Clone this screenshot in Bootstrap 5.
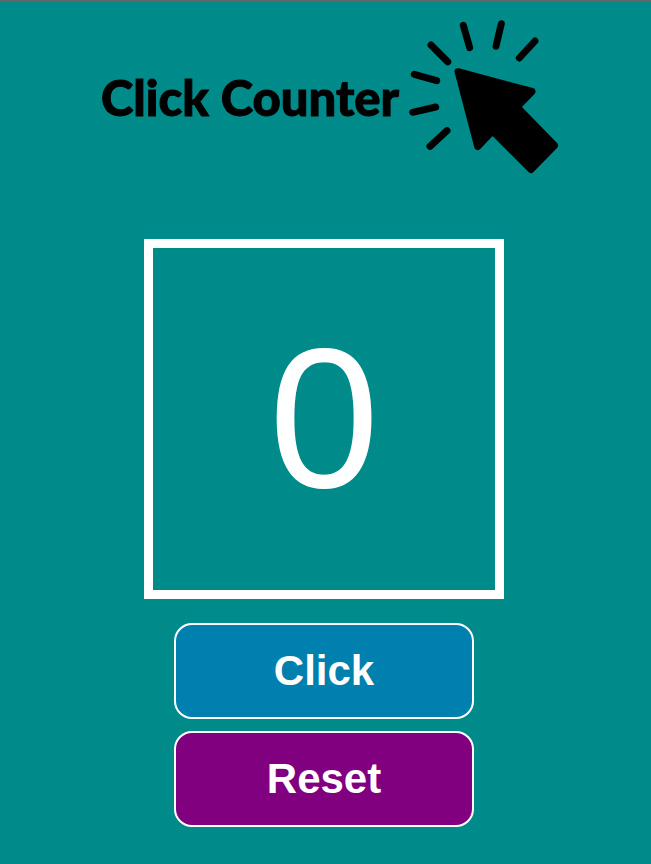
<!DOCTYPE html>
<html lang="en">
<head>
<meta charset="utf-8">
<meta name="viewport" content="width=device-width, initial-scale=1">
<title>Click Counter</title>
<link href="https://cdn.jsdelivr.net/npm/bootstrap@5.3.0/dist/css/bootstrap.min.css" rel="stylesheet">
<style>
  body { background: #008b8b; border-top: 2px solid #666; font-family: "Liberation Sans", Arial, sans-serif; }
  .page { padding: 18px 3px 24px 0; }
  .brand { margin-bottom: 65px; padding-left: 12px; gap: 10px; }
  .brand-name { font-family: Lato, sans-serif; font-weight: 900; font-size: 49px; line-height: 60px; color: #000; -webkit-text-stroke: 1px #000; }
  .brand-icon { width: 150px; height: 154px; }
  .counter { width: 360px; max-width: 100%; aspect-ratio: 1; border: 9px solid #fff; font-size: 198px; line-height: 1; margin-bottom: 24px; }
  .action { width: 300px; max-width: 100%; height: 96px; padding: 0 0 2px; border: 2px solid #fff; border-radius: 18px; font-size: 42px; }
  .actions { gap: 12px; }
  .action-click, .action-click:hover { background: #0080ae; border-color: #fff; }
  .action-reset, .action-reset:hover { background: #800080; border-color: #fff; }
</style>
</head>
<body>
<main class="page d-flex flex-column align-items-center">
  <header class="brand d-flex align-items-center justify-content-center">
    <h1 class="brand-name text-nowrap mb-0">Click Counter</h1>
    <svg class="brand-icon flex-shrink-0" viewBox="409 20 150 154" aria-hidden="true">
      <g stroke="#000" stroke-width="7" stroke-linecap="round">
        <path d="M463.300 25.300 469.700 47.700M501.300 23.700 496 46.300M535 41 519.300 58M431 45 447.700 61.700M414.300 74.300 436.700 80.700M412.700 112.300 435.700 107M430 146.300 447 130.700"/>
      </g>
      <path d="M458 71.700 532 91.500 517 107 554.500 145.500 531 169.500 492.500 131 477.700 146.500Z" stroke="#000" stroke-width="7" stroke-linejoin="round"/>
    </svg>
  </header>
  <output id="count" class="counter d-flex align-items-center justify-content-center text-white">0</output>
  <div class="actions d-flex flex-column align-items-center">
    <button type="button" id="add" class="action action-click btn fw-bold text-white">Click</button>
    <button type="button" id="reset" class="action action-reset btn fw-bold text-white">Reset</button>
  </div>
</main>
<script src="https://cdn.jsdelivr.net/npm/bootstrap@5.3.0/dist/js/bootstrap.bundle.min.js"></script>
<script>
  const count = document.getElementById('count');
  document.getElementById('add').addEventListener('click', () => { count.textContent = Number(count.textContent) + 1; });
  document.getElementById('reset').addEventListener('click', () => { count.textContent = 0; });
</script>
</body>
</html>
